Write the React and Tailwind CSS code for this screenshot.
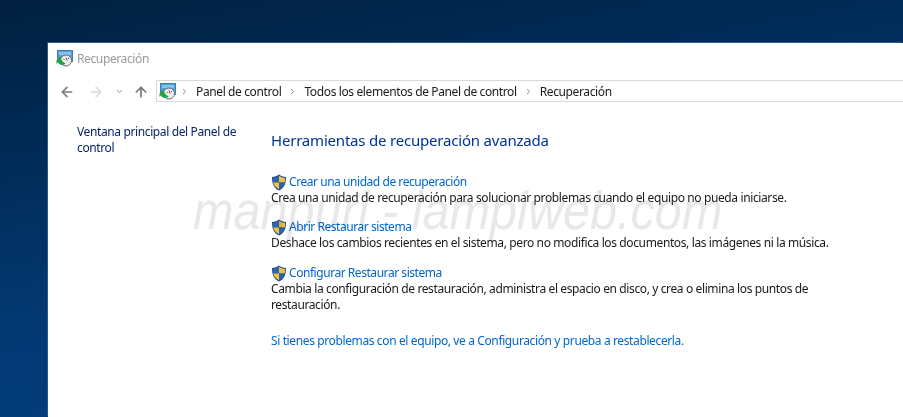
import { ArrowLeft, ArrowRight, ArrowUp, ChevronDown, ChevronRight } from "lucide-react";

const font = { fontFamily: '"Noto Sans", sans-serif' };

// Control panel recovery icon: blue monitor, gauge and green arrow
function RecoveryIcon() {
  return (
    <svg width="17" height="17" viewBox="0 0 17 17" className="shrink-0">
      <rect x="1.5" y="0.5" width="15" height="11" fill="#4f9fd8" stroke="#3f7fb5" />
      <rect x="3" y="2" width="12" height="3" fill="#86c3ec" />
      <circle cx="10" cy="10.500" r="5.500" fill="#ededed" stroke="#707070" />
      <path d="M10 7.500l1 3M7.500 9.500h1M12 8.500h1" stroke="#555" strokeWidth="1" />
      <path d="M0.500 10.500 4 6.500l1 2.200c.8 2 2.200 3.600 4.500 4.800-2.500 2.600-6.800 1.500-7.500-1.300L0.500 14z" fill="#23a043" />
    </svg>
  );
}

function ShieldIcon() {
  return (
    <svg width="16" height="17" viewBox="0 0 16 17" className="shrink-0">
      <path d="M8 .5c2 1.600 4.200 2.300 7 2.500 0 6.500-1.500 10.800-7 13.500C2.500 13.800 1 9.500 1 3c2.800-.2 5-.9 7-2.500z" fill="#1d4f91" />
      <path d="M8 1.800V8.500H2.200C2 7 2 5.500 2 4c2.300-.2 4.300-.9 6-2.200z" fill="#2b66b0" />
      <path d="M8 1.800c1.700 1.300 3.700 2 6 2.200 0 1.500 0 3-.2 4.500H8z" fill="#f3c23c" />
      <path d="M2.200 8.500H8v6.700c-3.300-1.800-5.200-3.700-5.800-6.700z" fill="#f3c23c" />
      <path d="M8 8.500h5.800c-.6 3-2.500 4.900-5.800 6.700z" fill="#2a62ab" />
    </svg>
  );
}

const tasks = [
  {
    title: "Crear una unidad de recuperación",
    desc: "Crea una unidad de recuperación para solucionar problemas cuando el equipo no pueda iniciarse.",
    cls: "mt-[24px]",
  },
  {
    title: "Abrir Restaurar sistema",
    desc: "Deshace los cambios recientes en el sistema, pero no modifica los documentos, las imágenes ni la música.",
    cls: "mt-[13px]",
  },
  {
    title: "Configurar Restaurar sistema",
    desc: "Cambia la configuración de restauración, administra el espacio en disco, y crea o elimina los puntos de restauración.",
    cls: "mt-[14px]",
  },
];

export default function App() {
  return (
    <div
      className="relative h-[417px] w-[903px] overflow-hidden bg-[linear-gradient(170deg,#01203f_0%,#012a55_25%,#033a75_60%,#04417f_100%)] pl-[48px] pt-[43px] text-[12px] tracking-[-0.38px]"
      style={font}
    >
      <div className="relative h-[374px] bg-white shadow-[-1px_-1px_0_#2a5a85]">
        {/* title bar */}
        <div className="flex h-[30px] items-center gap-[4px] pl-[8px] pt-[1px] text-[#9a9a9a]">
          <RecoveryIcon />
          <span>Recuperación</span>
        </div>

        {/* nav + address */}
        <div className="mt-[7px] flex h-[22px] items-center">
          <div className="flex w-[108px] items-center pl-[11px] pt-[1px]">
            <ArrowLeft size={16} strokeWidth={2.4} className="text-[#7a7a7a]" />
            <ArrowRight size={16} strokeWidth={2} className="ml-[13px] text-[#d6d6d6]" />
            <ChevronDown size={9} strokeWidth={2.5} className="ml-[11px] text-[#8a8a8a]" />
            <ArrowUp size={16} strokeWidth={2.6} className="ml-[9px] text-[#7a7a7a]" />
          </div>
          <div className="flex h-[22px] flex-1 items-center border-y border-l border-[#d9d9d9] pl-[2px] pt-[1px] text-[#1a1a1a]">
            <RecoveryIcon />
            <ChevronRight size={9} strokeWidth={2} className="ml-[4px] text-[#666]" />
            <span className="ml-[7px]">Panel de control</span>
            <ChevronRight size={9} strokeWidth={2} className="ml-[7px] text-[#666]" />
            <span className="ml-[7px]">Todos los elementos de Panel de control</span>
            <ChevronRight size={9} strokeWidth={2} className="ml-[7px] text-[#666]" />
            <span className="ml-[7px]">Recuperación</span>
          </div>
        </div>

        <div className="flex">
          {/* side links */}
          <div className="w-[223px] pl-[29px] pt-[22px] leading-[16px] text-[#0a246a]">
            Ventana principal del Panel de
            <br />
            control
          </div>

          {/* main content */}
          <div className="flex-1 pr-[60px] pt-[28px]">
            <h1 className="text-[15px] leading-[20px] tracking-[-0.2px] text-[#003399]">
              Herramientas de recuperación avanzada
            </h1>
            {tasks.map((t) => (
              <div key={t.title} className={t.cls}>
                <div className="flex h-[16px] items-center gap-[2px] text-[#0066cc]">
                  <ShieldIcon />
                  <span className="tracking-[-0.45px]">{t.title}</span>
                </div>
                <p className="leading-[16px] text-[#1a1a1a]">{t.desc}</p>
              </div>
            ))}
            <p className="mt-[20px] leading-[16px] text-[#0066cc]">
              Si tienes problemas con el equipo, ve a Configuración y prueba a restablecerla.
            </p>
          </div>
        </div>

        {/* watermark over the page */}
        <div
          className="pointer-events-none absolute left-[145px] top-[137px] origin-left scale-x-[0.9] whitespace-nowrap text-[54px] italic leading-[60px] tracking-[0px] text-[#e8e8e8] mix-blend-multiply"
          style={{ fontFamily: '"Liberation Sans", sans-serif' }}
        >
          manpuri - lampiweb.com
        </div>
      </div>
    </div>
  );
}
